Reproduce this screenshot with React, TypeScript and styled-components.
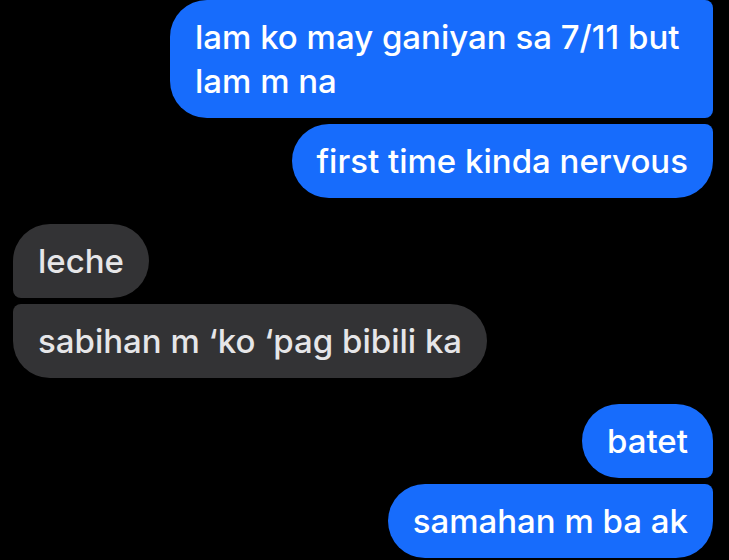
import React from "react";
import styled, { createGlobalStyle, css } from "styled-components";

const Global = createGlobalStyle`
  html, body { margin: 0; padding: 0; background: #000; }
  body { font-family: Inter, "Noto Sans", "Liberation Sans", sans-serif; -webkit-font-smoothing: antialiased; }
  #root { width: 729px; height: 560px; overflow: hidden; background: #000; }
`;

const Thread = styled.div`
  display: flex;
  flex-direction: column;
  gap: 26px;
  padding: 0 16px 0 13px;
`;

const Group = styled.div<{ $mine: boolean }>`
  display: flex;
  flex-direction: column;
  gap: 6px;
  align-items: ${(p) => (p.$mine ? "flex-end" : "flex-start")};
`;

type Pos = "first" | "middle" | "last" | "single";

const BIG = 37;
const SMALL = 8;

const Bubble = styled.div<{ $mine: boolean; $pos: Pos }>`
  box-sizing: border-box;
  max-width: 543px;
  padding: 15px 25px;
  font-size: 33px;
  line-height: 44px;
  font-weight: 500;
  letter-spacing: 0;
  color: ${(p) => (p.$mine ? "#ffffff" : "#e6e6e8")};
  background: ${(p) => (p.$mine ? "#176cfc" : "#333335")};
  ${(p) => {
    const topInner = p.$pos === "middle" || p.$pos === "last" ? SMALL : BIG;
    const bottomInner = p.$pos === "first" || p.$pos === "middle" ? SMALL : BIG;
    return p.$mine
      ? css`
          border-radius: ${BIG}px ${topInner}px ${bottomInner}px ${BIG}px;
        `
      : css`
          border-radius: ${topInner}px ${BIG}px ${BIG}px ${bottomInner}px;
        `;
  }}
`;

type Msg = { text: string; pos: Pos };
type G = { mine: boolean; msgs: Msg[] };

const groups: G[] = [
  {
    mine: true,
    msgs: [
      { text: "lam ko may ganiyan sa 7/11 but lam m na", pos: "middle" },
      { text: "first time kinda nervous", pos: "last" },
    ],
  },
  {
    mine: false,
    msgs: [
      { text: "leche", pos: "first" },
      { text: "sabihan m \u2018ko \u2018pag bibili ka", pos: "last" },
    ],
  },
  {
    mine: true,
    msgs: [
      { text: "batet", pos: "first" },
      { text: "samahan m ba ak", pos: "last" },
    ],
  },
];

export default function App() {
  return (
    <>
      <Global />
      <Thread>
        {groups.map((g, i) => (
          <Group key={i} $mine={g.mine}>
            {g.msgs.map((m, j) => (
              <Bubble key={j} $mine={g.mine} $pos={m.pos}>
                {m.text}
              </Bubble>
            ))}
          </Group>
        ))}
      </Thread>
    </>
  );
}
